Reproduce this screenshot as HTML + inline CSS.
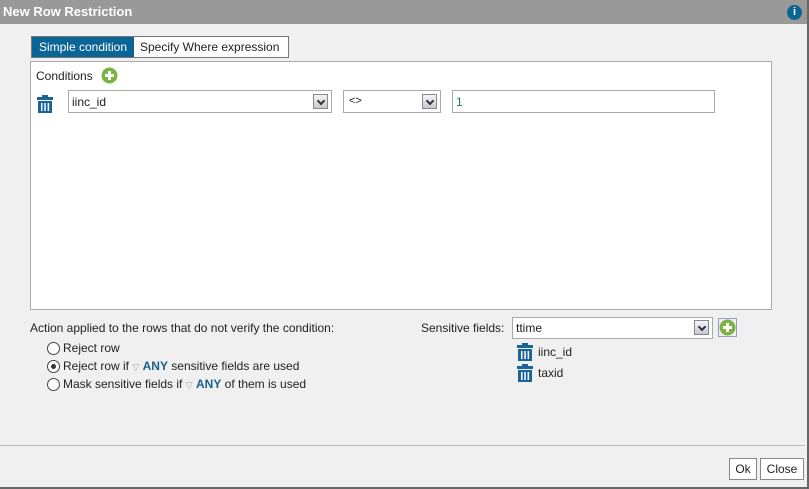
<!DOCTYPE html><html><head><style>
body{margin:0;width:809px;height:489px;background:#f0f0f0;font-family:"Liberation Sans",sans-serif;font-size:12px;color:#222;position:relative;overflow:hidden}
.a{position:absolute}
.sel{position:absolute;background:#fff;border:1px solid #aaa;box-sizing:border-box}
.arr{position:absolute;right:3px;top:3px;width:15px;height:15px;background:linear-gradient(#f4f4f8,#c8c8d4);border:1px solid #888;box-sizing:border-box}
.arr:after{content:"";position:absolute;left:4px;top:3px;width:4px;height:4px;border-right:2px solid #333;border-bottom:2px solid #333;transform:rotate(45deg)}
.rad{position:absolute;width:11px;height:11px;border:1px solid #444;border-radius:50%;background:#fff}
.btn{position:absolute;background:#fff;border:1px solid #888;box-sizing:border-box;text-align:center;line-height:20px}
.b{color:#1a5f8f;font-weight:bold}
</style></head><body>
<div class="a" style="left:0;top:0;width:809px;height:24px;background:#999"></div>
<div class="a" style="left:3px;top:4px;color:#fff;font-weight:bold;font-size:13px">New Row Restriction</div>
<div class="a" style="left:787px;top:5px;width:15px;height:15px;border-radius:50%;background:#0a6496;color:#fff;font-weight:bold;font-size:11px;text-align:center;line-height:15px">i</div>
<div class="a" style="left:807px;top:0;width:2px;height:489px;background:#666"></div>
<div class="a" style="left:0;top:487px;width:809px;height:2px;background:#666"></div>
<div class="a" style="left:31px;top:36px;width:258px;height:22px;border:1px solid #777;background:#fff;box-sizing:border-box"></div>
<div class="a" style="left:32px;top:37px;width:102px;height:20px;background:#0a6496;color:#fff;line-height:20px;text-align:center">Simple condition</div>
<div class="a" style="left:140px;top:37px;line-height:20px">Specify Where expression</div>
<div class="a" style="left:30px;top:61px;width:742px;height:249px;background:#fff;border:1px solid #aaa;box-sizing:border-box"></div>
<div class="a" style="left:36px;top:69px">Conditions</div>
<svg class="a" style="left:101px;top:67px" width="17" height="17"><circle cx="8.5" cy="8.5" r="8" fill="#7cb342"/><rect x="7" y="4" width="3" height="9" fill="#fff"/><rect x="4" y="7" width="9" height="3" fill="#fff"/></svg>
<svg class="a" style="left:37px;top:95px" width="16" height="18"><rect x="5" y="0" width="6" height="2" fill="#1a6496"/><rect x="0" y="2" width="16" height="3" fill="#1a6496"/><rect x="1" y="6" width="14" height="12" fill="#1a6496"/><rect x="4" y="8" width="1.5" height="8" fill="#fff"/><rect x="7.3" y="8" width="1.5" height="8" fill="#fff"/><rect x="10.6" y="8" width="1.5" height="8" fill="#fff"/></svg>
<div class="sel" style="left:68px;top:90px;width:264px;height:23px"><span class="a" style="left:3px;top:4px">iinc_id</span><div class="arr"></div></div>
<div class="sel" style="left:343px;top:90px;width:98px;height:23px"><span class="a" style="left:5px;top:4px;font-size:11px">&lt;&gt;</span><div class="arr"></div></div>
<div class="sel" style="left:452px;top:90px;width:263px;height:23px"><span class="a" style="left:3px;top:4px;color:#1a7a5a">1</span></div>
<div class="a" style="left:30px;top:321px">Action applied to the rows that do not verify the condition:</div>
<div class="rad" style="left:47px;top:342px"></div><div class="a" style="left:63px;top:341px">Reject row</div>
<div class="rad" style="left:47px;top:360px"></div><div class="a" style="left:51px;top:364px;width:5px;height:5px;border-radius:50%;background:#333"></div><div class="a" style="left:63px;top:359px">Reject row if <span style="color:#aaa;font-size:9px">▽</span> <span class="b">ANY</span> sensitive fields are used</div>
<div class="rad" style="left:47px;top:378px"></div><div class="a" style="left:63px;top:377px">Mask sensitive fields if <span style="color:#aaa;font-size:9px">▽</span> <span class="b">ANY</span> of them is used</div>
<div class="a" style="left:421px;top:321px">Sensitive fields:</div>
<div class="sel" style="left:512px;top:317px;width:201px;height:22px"><span class="a" style="left:3px;top:3px">ttime</span><div class="arr" style="top:2px"></div></div>
<div class="a" style="left:718px;top:318px;width:19px;height:19px;border:1px solid #99c;box-sizing:border-box"></div>
<svg class="a" style="left:719px;top:319px" width="17" height="17"><circle cx="8.5" cy="8.5" r="8" fill="#7cb342"/><rect x="7" y="4" width="3" height="9" fill="#fff"/><rect x="4" y="7" width="9" height="3" fill="#fff"/></svg>
<svg class="a" style="left:517px;top:343px" width="16" height="18"><rect x="5" y="0" width="6" height="2" fill="#1a6496"/><rect x="0" y="2" width="16" height="3" fill="#1a6496"/><rect x="1" y="6" width="14" height="12" fill="#1a6496"/><rect x="4" y="8" width="1.5" height="8" fill="#fff"/><rect x="7.3" y="8" width="1.5" height="8" fill="#fff"/><rect x="10.6" y="8" width="1.5" height="8" fill="#fff"/></svg>
<div class="a" style="left:538px;top:345px">iinc_id</div>
<svg class="a" style="left:517px;top:364px" width="16" height="18"><rect x="5" y="0" width="6" height="2" fill="#1a6496"/><rect x="0" y="2" width="16" height="3" fill="#1a6496"/><rect x="1" y="6" width="14" height="12" fill="#1a6496"/><rect x="4" y="8" width="1.5" height="8" fill="#fff"/><rect x="7.3" y="8" width="1.5" height="8" fill="#fff"/><rect x="10.6" y="8" width="1.5" height="8" fill="#fff"/></svg>
<div class="a" style="left:538px;top:366px">taxid</div>
<div class="a" style="left:0;top:445px;width:805px;height:1px;background:#bbb"></div>
<div class="btn" style="left:729px;top:458px;width:28px;height:22px">Ok</div>
<div class="btn" style="left:760px;top:458px;width:44px;height:22px">Close</div>
</body></html>
